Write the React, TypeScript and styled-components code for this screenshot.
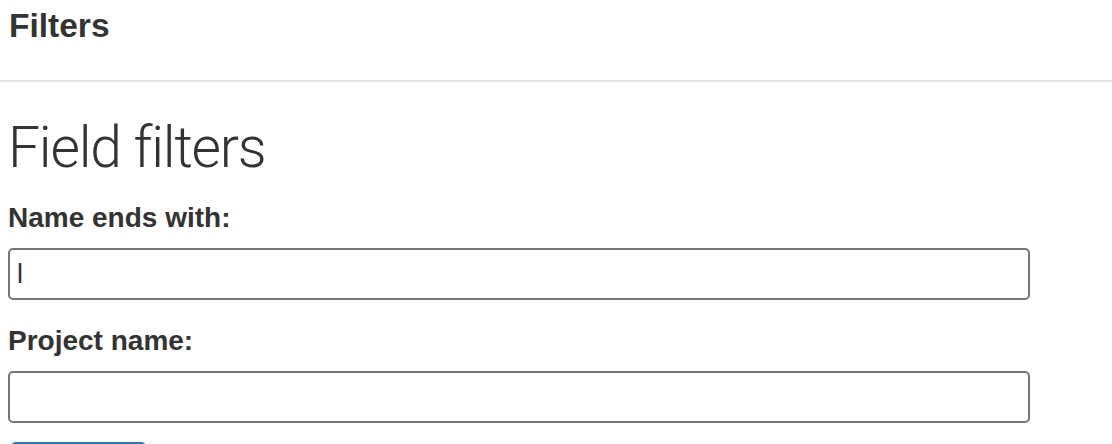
import { useState } from 'react';
import styled, { createGlobalStyle } from 'styled-components';

const GlobalStyle = createGlobalStyle`
  html, body {
    margin: 0;
    padding: 0;
    background: #fff;
  }
  body {
    font-family: 'Liberation Sans', Arial, Helvetica, sans-serif;
    color: #333;
  }
`;

const PageHeader = styled.header`
  box-sizing: border-box;
  height: 82px;
  padding: 7px 9px 0;
  border-bottom: 2px solid #e5e5e5;
`;

const HeaderTitle = styled.h3`
  margin: 0;
  font-size: 33.5px;
  line-height: 38px;
  font-weight: 700;
  color: #333;
`;

const Content = styled.main`
  padding: 0 8px;
`;

const SectionTitle = styled.h1`
  margin: 34px 0 0;
  font-family: Roboto, 'Liberation Sans', sans-serif;
  font-weight: 300;
  font-size: 57px;
  line-height: 64px;
  letter-spacing: -1.2px;
  color: #333;
`;

const FilterForm = styled.form`
  display: flex;
  flex-direction: column;
  margin-top: 22px;
`;

const FieldGroup = styled.div`
  display: flex;
  flex-direction: column;
  gap: 14px;
  margin-bottom: 25px;
  &:last-of-type {
    margin-bottom: 19px;
  }
`;

const Label = styled.label`
  font-size: 28px;
  line-height: 32px;
  font-weight: 700;
  color: #333;
`;

const TextInput = styled.input`
  box-sizing: border-box;
  width: 1022px;
  height: 52px;
  padding: 0 7px;
  border: 2px solid #767676;
  border-radius: 5px;
  font-family: 'Liberation Sans', Arial, sans-serif;
  font-size: 27px;
  color: #333;
  background: #fff;
  outline: none;
`;

const SubmitButton = styled.button`
  align-self: flex-start;
  margin-left: 2px;
  width: 137px;
  height: 50px;
  border: 1px solid #2e6da4;
  border-radius: 6px;
  background: #337ab7;
  color: #fff;
  font-family: 'Liberation Sans', Arial, sans-serif;
  font-size: 24px;
`;

export default function App() {
  const [nameEnd, setNameEnd] = useState('l');
  const [project, setProject] = useState('');

  return (
    <>
      <GlobalStyle />
      <PageHeader>
        <HeaderTitle>Filters</HeaderTitle>
      </PageHeader>
      <Content>
        <SectionTitle>Field filters</SectionTitle>
        <FilterForm onSubmit={(e) => e.preventDefault()}>
          <FieldGroup>
            <Label htmlFor="name-end">Name ends with:</Label>
            <TextInput
              id="name-end"
              type="text"
              value={nameEnd}
              onChange={(e) => setNameEnd(e.target.value)}
            />
          </FieldGroup>
          <FieldGroup>
            <Label htmlFor="project-name">Project name:</Label>
            <TextInput
              id="project-name"
              type="text"
              value={project}
              onChange={(e) => setProject(e.target.value)}
            />
          </FieldGroup>
          <SubmitButton type="submit">Filter</SubmitButton>
        </FilterForm>
      </Content>
    </>
  );
}
